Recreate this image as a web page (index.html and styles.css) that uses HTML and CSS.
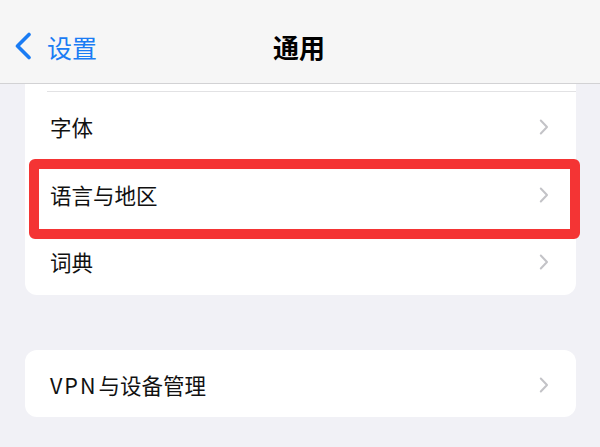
FILE: index.html
```html
<!DOCTYPE html>
<html lang="zh-CN">
<head>
<meta charset="utf-8">
<link rel="stylesheet" href="styles.css">
</head>
<body>
<header class="navbar">
  <div class="nav-back">
    <svg class="back-icon" width="19" height="28" viewBox="0 0 19 28"><path d="M15 2.5 L3.5 14 L15 25.5" fill="none" stroke="#1a7cf4" stroke-width="3.6" stroke-linecap="round" stroke-linejoin="round"/></svg>
    <span class="back-text">设置</span>
  </div>
  <div class="nav-title">通用</div>
  <div></div>
</header>
<main class="content">
  <section class="card card-top">
    <div class="row-stub"></div>
    <div class="row"><span class="label">字体</span><svg class="chev" width="10" height="16" viewBox="0 0 10 16"><path d="M1.8 1.5 L8 8 L1.8 14.5" fill="none" stroke="#c3c3c7" stroke-width="2" stroke-linecap="round" stroke-linejoin="round"/></svg></div>
    <div class="row"><span class="label">语言与地区</span><svg class="chev" width="10" height="16" viewBox="0 0 10 16"><path d="M1.8 1.5 L8 8 L1.8 14.5" fill="none" stroke="#c3c3c7" stroke-width="2" stroke-linecap="round" stroke-linejoin="round"/></svg></div>
    <div class="row"><span class="label">词典</span><svg class="chev" width="10" height="16" viewBox="0 0 10 16"><path d="M1.8 1.5 L8 8 L1.8 14.5" fill="none" stroke="#c3c3c7" stroke-width="2" stroke-linecap="round" stroke-linejoin="round"/></svg></div>
    <div class="highlight"></div>
  </section>
  <section class="card card-round">
    <div class="row row-vpn"><span class="label"><span class="latin">VPN</span>与设备管理</span><svg class="chev" width="10" height="16" viewBox="0 0 10 16"><path d="M1.8 1.5 L8 8 L1.8 14.5" fill="none" stroke="#c3c3c7" stroke-width="2" stroke-linecap="round" stroke-linejoin="round"/></svg></div>
  </section>
</main>
</body>
</html>
```
FILE: styles.css
```css
* { box-sizing: border-box; }
html, body {
  margin: 0;
  padding: 0;
  width: 600px;
  height: 447px;
  overflow: hidden;
  background: #f1f1f6;
  font-family: "Noto Sans CJK SC", "Noto Sans", sans-serif;
  color: #111;
}
.navbar {
  height: 84px;
  background: #f6f6f6;
  border-bottom: 1px solid #d2d2d4;
  display: grid;
  grid-template-columns: 1fr auto 1fr;
  align-items: center;
  padding-top: 10px;
}
.nav-back {
  display: flex;
  align-items: center;
  padding-left: 14px;
  gap: 14px;
}
.back-icon { display: block; margin-top: -2px; }
.back-text {
  color: #1a7cf4;
  font-size: 25px;
  line-height: 28px;
}
.nav-title {
  font-size: 26px;
  font-weight: 700;
  line-height: 28px;
  color: #000;
  margin-right: 2px;
}
.content {
  padding: 0 24px 0 25px;
}
.card {
  background: #fff;
  position: relative;
}
.card-top {
  border-radius: 0 0 12px 12px;
}
.card-round {
  margin-top: 55px;
  border-radius: 12px;
}
.row-stub {
  height: 8px;
  margin-left: 22px;
  border-bottom: 1px solid #e2e2e4;
}
.row {
  height: 67.5px;
  display: flex;
  align-items: center;
  justify-content: space-between;
  padding: 3px 27px 0 25px;
}
.row-vpn { height: 67px; }
.label {
  font-size: 21.5px;
  line-height: 28px;
  color: #111;
}
.latin {
  letter-spacing: 2px;
  margin-right: 1px;
}
.chev { display: block; }
.highlight {
  position: absolute;
  left: 4px;
  top: 75px;
  width: 551px;
  height: 80px;
  border: 10px solid #f43434;
  border-radius: 6px;
  pointer-events: none;
}
```
